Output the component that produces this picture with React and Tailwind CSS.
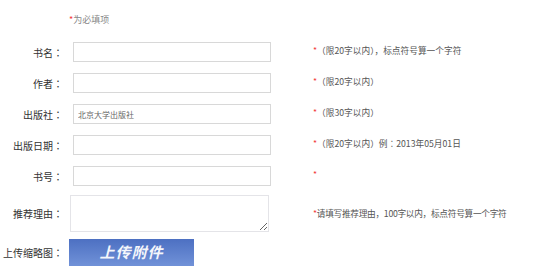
const rows = [
  { label: '书名', hint: ['（限20字以内），标点符号算一个字符'] },
  { label: '作者', hint: ['（限20字以内）'] },
  { label: '出版社', hint: ['（限30字以内）'], value: '北京大学出版社' },
  { label: '出版日期', hint: ['（限20字以内）例', '2013年05月01日'] },
  { label: '书号', hint: [''] },
];

const Star = () => <span className="text-[#f23a3a]">*</span>;

// centered full-width colon, as in the original page font
const Colon = () => <span className="font-['Noto_Sans_CJK_TC',sans-serif]">：</span>;

const Label = ({ children }) => (
  <label className="w-[63px] text-right text-[10px] text-[#333] whitespace-nowrap">
    {children}
    <Colon />
  </label>
);

const App = () => {
  return (
    <div className="w-[558px] h-[275px] bg-white overflow-hidden font-['Noto_Sans_CJK_SC','Microsoft_YaHei',sans-serif]">
      {/* required note */}
      <div className="pt-[14px] pl-[69px] text-[9px] leading-[12px] text-[#888]">
        <Star />为必填项
      </div>

      {/* text fields */}
      <div className="mt-[16px] flex flex-col gap-[11px]">
        {rows.map((r) => (
          <div key={r.label} className="flex items-center h-[20px]">
            <Label>{r.label}</Label>
            <input
              type="text"
              defaultValue={r.value || ''}
              className="ml-[10px] w-[198px] h-[20px] border border-[#d8d8d8] bg-white px-[4px] text-[8px] text-[#666] outline-none"
            />
            <p className="ml-[42px] -mt-[3px] text-[8.7px] text-[#555] whitespace-nowrap">
              <Star />
              {r.hint[0]}
              {r.hint[1] && (
                <>
                  <Colon />
                  {r.hint[1]}
                </>
              )}
            </p>
          </div>
        ))}
      </div>

      {/* reason */}
      <div className="mt-[9px] flex items-center h-[37px]">
        <Label>推荐理由</Label>
        <textarea className="ml-[7px] w-[199px] h-[37px] border border-[#e4e4e8] bg-white outline-none" />
        <p className="ml-[44px] text-[8.7px] text-[#555] whitespace-nowrap tracking-[-0.3px]">
          <Star />请填写推荐理由，100字以内，标点符号算一个字符
        </p>
      </div>

      {/* upload */}
      <div className="mt-[7px] flex items-center h-[27px]">
        <Label>上传缩略图</Label>
        <button
          type="button"
          className="ml-[6px] w-[125px] h-[27px] bg-gradient-to-b from-[#4d70c2] to-[#7192d8] text-[15px] font-bold italic text-[#f4f6fb] tracking-[1px]"
        >
          上传附件
        </button>
      </div>
    </div>
  );
};

export default App;
